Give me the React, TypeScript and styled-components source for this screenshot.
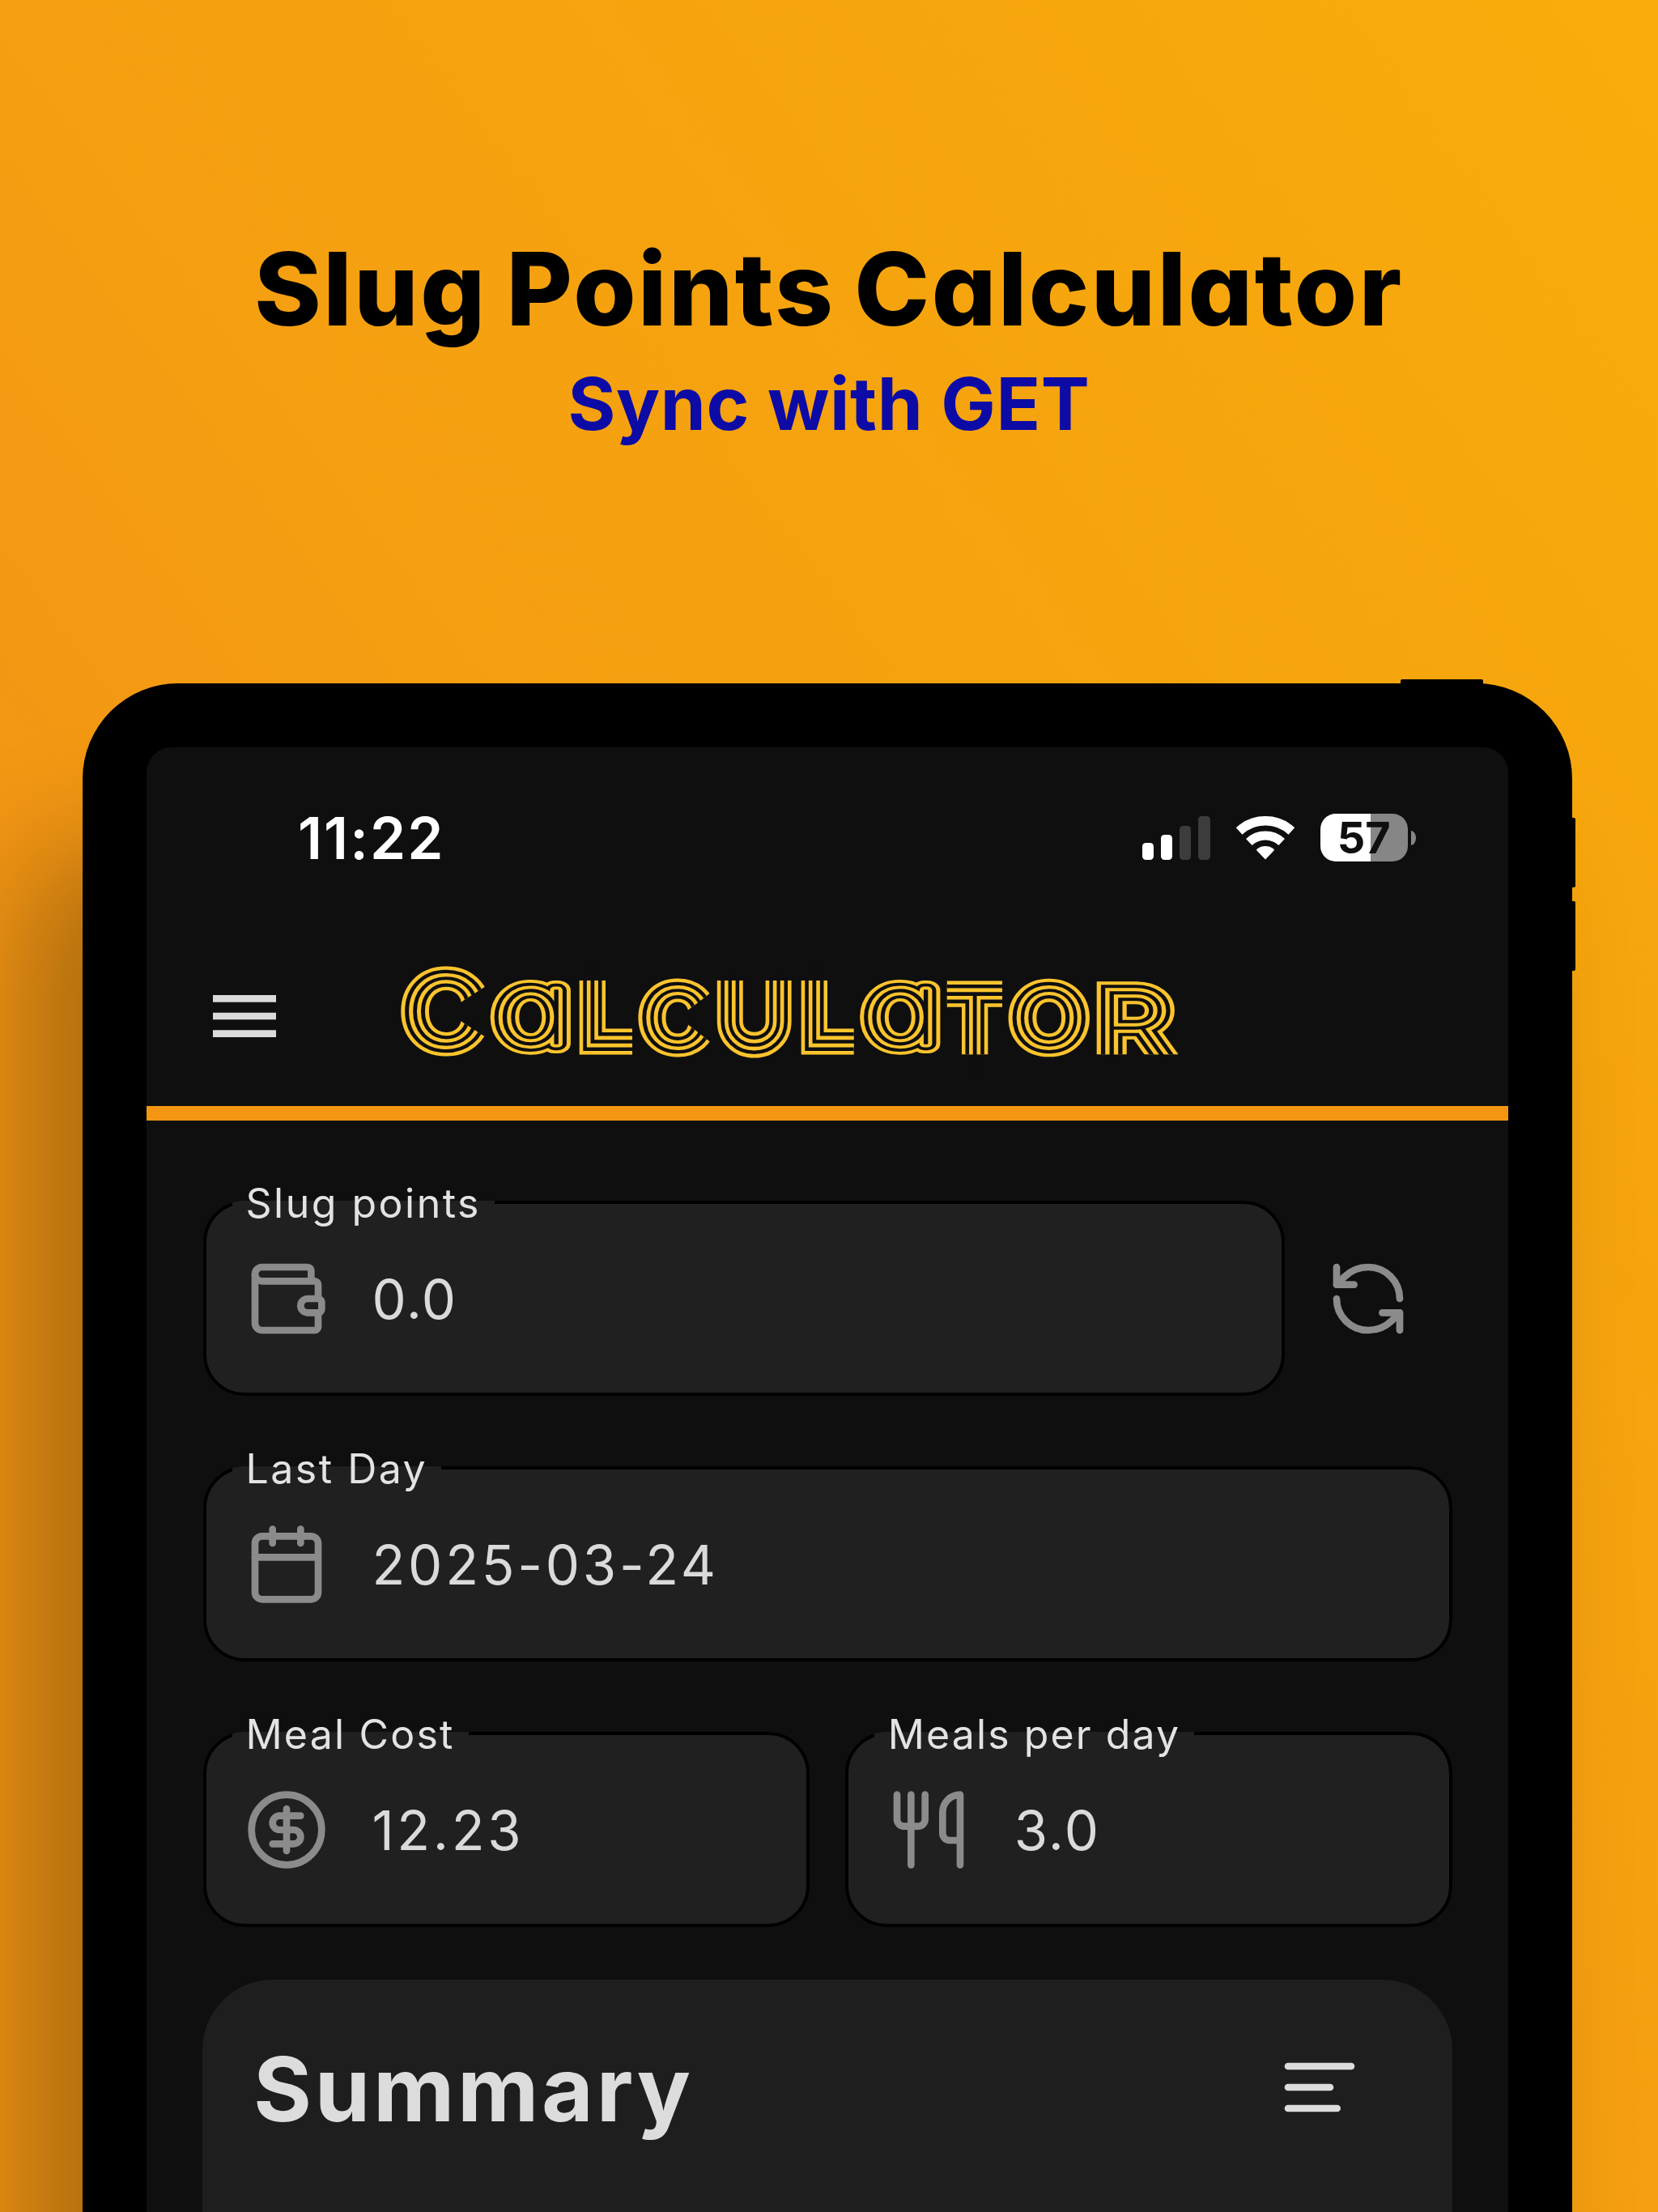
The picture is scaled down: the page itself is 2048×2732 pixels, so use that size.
import React from "react";
import styled, { createGlobalStyle } from "styled-components";

const GlobalStyle = createGlobalStyle`
  *, *::before, *::after { box-sizing: border-box; }
  body { margin: 0; }
`;

const sans = `Inter, "Liberation Sans", sans-serif`;

const Page = styled.main`
  display: flex;
  flex-direction: column;
  align-items: center;
  width: 2048px;
  height: 2732px;
  overflow: hidden;
  background: linear-gradient(to bottom left, #f9ac0b 0%, #f6a50d 25%, #f59f11 50%, #f39614 68%);
  font-family: ${sans};
`;

const Hero = styled.header`
  flex: none;
  width: 100%;
  height: 844px;
  padding-top: 282px;
  text-align: center;
`;

const Title = styled.h1`
  margin: 0;
  font-size: 125px;
  font-weight: 800;
  line-height: 150px;
  letter-spacing: 2.5px;
  word-spacing: -6px;
  font-feature-settings: "cv11";
  color: #000;
`;

const Subtitle = styled.h2`
  margin: 17px 0 0;
  font-size: 90px;
  font-weight: 700;
  line-height: 100px;
  letter-spacing: 0.6px;
  color: #0c0ba6;
`;

const Device = styled.section`
  position: relative;
  flex: none;
  width: 1840px;
  height: 2100px;
  margin-right: 4px;
  padding: 79px;
  border-radius: 118px;
  background: #000;
  box-shadow: -80px 200px 150px rgba(0, 0, 0, 0.28);
`;

const TopButton = styled.span`
  position: absolute;
  top: -5px;
  right: 110px;
  width: 102px;
  height: 10px;
  border-radius: 2px 2px 0 0;
  background: #000;
`;

const SideButton = styled.span<{ $top: number }>`
  position: absolute;
  top: ${(p) => p.$top}px;
  right: -4px;
  width: 8px;
  height: 86px;
  border-radius: 0 2px 2px 0;
  background: #000;
`;

const Screen = styled.div`
  height: 100%;
  overflow: hidden;
  border-radius: 31px;
  background: #0f0f0f;
`;

const StatusBar = styled.div`
  display: flex;
  align-items: center;
  justify-content: space-between;
  height: 220px;
  padding: 3px 114px 0 187px;
`;

const Clock = styled.time`
  font-size: 71px;
  font-weight: 600;
  line-height: 80px;
  letter-spacing: 2.1px;
  color: #fff;
`;

const Indicators = styled.div`
  display: flex;
  align-items: center;
  gap: 32px;
`;

const Signal = styled.div`
  display: flex;
  align-items: flex-end;
  gap: 8.7px;
  height: 54px;
`;

const SignalBar = styled.span<{ $height: number; $on?: boolean }>`
  width: 14.4px;
  height: ${(p) => p.$height}px;
  border-radius: 4.5px;
  background: ${(p) => (p.$on ? "#fff" : "#3c3c3c")};
`;

const Battery = styled.div`
  display: flex;
  align-items: center;
  gap: 4px;
`;

const BatteryBody = styled.div`
  display: flex;
  align-items: center;
  justify-content: center;
  width: 108.5px;
  height: 59.5px;
  border-radius: 19px;
  background: linear-gradient(to right, #fff 57.5%, #868686 57.5%);
  color: #0f0f0f;
  font-size: 54px;
  font-weight: 700;
  line-height: 60px;
`;

const BatteryCap = styled.span`
  width: 6px;
  height: 18px;
  border-radius: 0 6px 6px 0 / 0 9px 9px 0;
  background: #868686;
`;

const AppBar = styled.div`
  display: flex;
  align-items: center;
  height: 241px;
  padding-left: 69px;
  border-bottom: 18px solid #f39712;
`;

const Wordmark = styled.svg`
  width: 970px;
  height: 150px;
  margin-left: 136px;
  font-family: Inter, sans-serif;
  font-weight: 100;
  font-feature-settings: "cv11";
`;

const Stripe = styled.g<{ $width: number; $dark?: boolean }>`
  --stripe: ${(p) => p.$width}px;
  fill: ${(p) => (p.$dark ? "#0f0f0f" : "#fcc42d")};
  stroke: ${(p) => (p.$dark ? "#0f0f0f" : "#fcc42d")};
`;

const GlyphSpan = styled.tspan<{ $size: number; $pen: number; $caps: boolean }>`
  font-size: ${(p) => p.$size}px;
  stroke-width: calc(var(--stripe) * ${(p) => p.$pen});
  stroke-linejoin: ${(p) => (p.$caps ? "miter" : "round")};
  text-transform: ${(p) => (p.$caps ? "uppercase" : "none")};
`;

const Form = styled.div`
  display: flex;
  flex-direction: column;
  gap: 57px;
  padding: 69px 69.5px 0;
`;

const FormRow = styled.div`
  display: flex;
  gap: 43.5px;
`;

const FieldBox = styled.fieldset<{ $width?: number }>`
  flex: ${(p) => (p.$width ? `0 0 ${p.$width}px` : "1 1 0")};
  min-width: 0;
  height: 271px;
  margin: 0;
  padding: 0 32px;
  border: 4px solid #000;
  border-radius: 51px;
  background: #202020;
`;

const FieldLabel = styled.legend<{ $tracking: number }>`
  height: 63px;
  padding: 3px 17px 0;
  font-size: 50px;
  line-height: 60px;
  letter-spacing: ${(p) => p.$tracking}px;
  color: #e3e3e3;
`;

const FieldBody = styled.div`
  display: flex;
  align-items: center;
  gap: 54px;
  height: 104px;
  margin-top: 36px;
  padding-left: 15px;
`;

const FieldValue = styled.span<{ $tracking: number }>`
  padding-top: 2px;
  font-size: 67px;
  line-height: 80px;
  letter-spacing: ${(p) => p.$tracking}px;
  color: #dadada;
`;

const SyncButton = styled.button`
  display: flex;
  margin: 99px 0 0 8px;
  padding: 0;
  height: 104px;
  border: 0;
  background: none;
`;

const IconSvg = styled.svg<{ $tone: string }>`
  flex: none;
  width: 104px;
  height: 104px;
  fill: none;
  stroke: ${(p) => p.$tone};
  stroke-width: 2;
  stroke-linecap: round;
  stroke-linejoin: round;
`;

const Card = styled.section`
  height: 600px;
  margin: 65px 69px 0;
  padding: 81px 112px 0 63px;
  border-radius: 87px;
  background: #1e1e1e;
`;

const CardHeader = styled.div`
  display: flex;
  align-items: center;
  justify-content: space-between;
  height: 104px;
`;

const CardTitle = styled.h3`
  margin: 0;
  padding-top: 4px;
  font-size: 110px;
  font-weight: 700;
  line-height: 130px;
  letter-spacing: 3.7px;
  color: #dcdcdc;
`;

const icons = {
  wallet: [
    "M19 7V4a1 1 0 0 0-1-1H5a2 2 0 0 0 0 4h15a1 1 0 0 1 1 1v4h-3a2 2 0 0 0 0 4h3a1 1 0 0 0 1-1v-2a1 1 0 0 0-1-1",
    "M3 5v14a2 2 0 0 0 2 2h15a1 1 0 0 0 1-1v-4",
  ],
  sync: [
    "M21 12a9 9 0 0 0-9-9 9.75 9.75 0 0 0-6.74 2.74L3 8",
    "M3 3v5h5",
    "M3 12a9 9 0 0 0 9 9 9.75 9.75 0 0 0 6.74-2.74L21 16",
    "M16 16h5v5",
  ],
  calendar: [
    "M8 2v4",
    "M16 2v4",
    "M5 4h14a2 2 0 0 1 2 2v14a2 2 0 0 1-2 2H5a2 2 0 0 1-2-2V6a2 2 0 0 1 2-2z",
    "M3 10h18",
  ],
  dollar: [
    "M12 2a10 10 0 1 0 0 20a10 10 0 1 0 0-20z",
    "M16 8h-6a2 2 0 1 0 0 4h4a2 2 0 1 1 0 4H8",
    "M12 18V6",
  ],
  utensils: [
    "M3 2v7c0 1.1.9 2 2 2h4a2 2 0 0 0 2-2V2",
    "M7 2v20",
    "M21 15V2a5 5 0 0 0-5 5v6c0 1.1.9 2 2 2h3Zm0 0v7",
  ],
  sort: ["M3 6h18", "M3 12h12", "M3 18h14"],
};

function Icon({ name, tone = "#8b8b8b" }: { name: keyof typeof icons; tone?: string }) {
  return (
    <IconSvg viewBox="0 0 24 24" $tone={tone} aria-hidden>
      {icons[name].map((d) => (
        <path key={d} d={d} />
      ))}
    </IconSvg>
  );
}

function MenuIcon() {
  return (
    <IconSvg viewBox="0 0 24 24" $tone="none" aria-hidden>
      <path fill="#dadada" d="M3 18h18v-2H3v2zm0-5h18v-2H3v2zm0-7v2h18V6H3z" />
    </IconSvg>
  );
}

function WifiIcon() {
  return (
    <svg width="72" height="54" viewBox="-36 -53.5 72 54" aria-hidden>
      <g fill="none" stroke="#fff">
        <path strokeWidth="11.4" d="M-32.4 -35 A47.7 47.7 0 0 1 32.4 -35" />
        <path strokeWidth="11" d="M-20.2 -21.5 A29.5 29.5 0 0 1 20.2 -21.5" />
      </g>
      <path fill="#fff" d="M0 0L-10.4 -10.8Q-11.6 -12 -10.2 -13A17 17 0 0 1 10.2 -13Q11.6 -12 10.4 -10.8Z" />
    </svg>
  );
}

type Letter = {
  char: string;
  x: number;
  y: number;
  size: number;
  /* advance width when the letter is widened */
  span?: number;
  pen?: number;
  /* area the stripes are kept in, so that stroke ends stay open */
  trim: string;
};

const letters: Letter[] = [
  { char: "C", x: 11.5, y: 110.3, size: 112.8, span: 95.8, pen: 0.92, trim: "M0 0H118V33L85 54L63 70L85 85L118 106V150H0Z" },
  { char: "a", x: 121.5, y: 108.7, size: 120, span: 92.9, pen: 0.82, trim: "M100 20H230V130H100Z" },
  { char: "l", x: 225.4, y: 107.8, size: 131, trim: "M215 31H291V124H215Z" },
  { char: "c", x: 306.3, y: 110.7, size: 93.5, span: 79.1, pen: 0.92, trim: "M290 20H390V44.4L364.5 64L348 76.7L364.5 89L390 109V150H290Z" },
  { char: "u", x: 398.7, y: 110.7, size: 119.5, trim: "M385 31H500V150H385Z" },
  { char: "l", x: 499.5, y: 107.8, size: 131, trim: "M490 31H564.7V124H490Z" },
  { char: "a", x: 578, y: 108.7, size: 120, span: 92.9, pen: 0.82, trim: "M560 20H690V130H560Z" },
  { char: "t", x: 670.9, y: 147.5, size: 140, trim: "M679.8 20H748V122.3H679.8Z" },
  { char: "o", x: 763.5, y: 110.7, size: 93.5, span: 84.5, pen: 0.91, trim: "M740 20H870V150H740Z" },
  { char: "r", x: 864.8, y: 126.3, size: 112, span: 91.2, pen: 0.87, trim: "M850 20H970V122.3H850Z" },
];

const stripes = [{ width: 29.2 }, { width: 20.2, dark: true }, { width: 10.9 }];

function Glyph({ letter }: { letter: Letter }) {
  const { char, x, y, size, span, pen = 1 } = letter;
  return (
    <GlyphSpan
      $size={size}
      $pen={pen}
      $caps={char !== "a"}
      x={x}
      y={y}
      textLength={span}
      lengthAdjust={span ? "spacingAndGlyphs" : undefined}
    >
      {char}
    </GlyphSpan>
  );
}

/* Striped display lettering: each pass strokes the letter with a narrower pen. */
function Logo() {
  return (
    <Wordmark viewBox="0 0 970 150" role="img" aria-label="Calculator">
      <defs>
        {letters.map((letter, i) => (
          <React.Fragment key={i}>
            <clipPath id={`trim-${i}`}>
              <path d={letter.trim} />
            </clipPath>
            <text id={`glyph-${i}`}>
              <Glyph letter={letter} />
            </text>
          </React.Fragment>
        ))}
      </defs>
      {letters.map((_, i) => (
        <g key={i} clipPath={`url(#trim-${i})`}>
          {stripes.map((s) => (
            <Stripe key={s.width} $width={s.width} $dark={s.dark}>
              <use href={`#glyph-${i}`} />
            </Stripe>
          ))}
        </g>
      ))}
      <Stripe $width={1.7} $dark>
        <text>
          {letters.map((letter, i) => (
            <Glyph key={i} letter={letter} />
          ))}
        </text>
      </Stripe>
    </Wordmark>
  );
}

type FieldProps = {
  label: string;
  labelTracking?: number;
  value: string;
  icon: keyof typeof icons;
  tracking: number;
  width?: number;
};

function Field({ label, labelTracking = 2.2, value, icon, tracking, width }: FieldProps) {
  return (
    <FieldBox $width={width}>
      <FieldLabel $tracking={labelTracking}>{label}</FieldLabel>
      <FieldBody>
        <Icon name={icon} />
        <FieldValue $tracking={tracking}>{value}</FieldValue>
      </FieldBody>
    </FieldBox>
  );
}

export default function App() {
  return (
    <>
      <GlobalStyle />
      <Page>
        <Hero>
          <Title>Slug Points Calculator</Title>
          <Subtitle>Sync with GET</Subtitle>
        </Hero>
        <Device>
          <TopButton />
          <SideButton $top={166} />
          <SideButton $top={269} />
          <Screen>
            <StatusBar>
              <Clock>11:22</Clock>
              <Indicators>
                <Signal>
                  <SignalBar $height={20.5} $on />
                  <SignalBar $height={30.7} $on />
                  <SignalBar $height={41.5} />
                  <SignalBar $height={53.5} />
                </Signal>
                <WifiIcon />
                <Battery>
                  <BatteryBody>57</BatteryBody>
                  <BatteryCap />
                </Battery>
              </Indicators>
            </StatusBar>
            <AppBar>
              <MenuIcon />
              <Logo />
            </AppBar>
            <Form>
              <FormRow>
                <Field label="Slug points" labelTracking={2.5} value="0.0" icon="wallet" tracking={1.6} width={1336} />
                <SyncButton aria-label="Sync">
                  <Icon name="sync" />
                </SyncButton>
              </FormRow>
              <FormRow>
                <Field label="Last Day" labelTracking={2.5} value="2025-03-24" icon="calendar" tracking={3.75} />
              </FormRow>
              <FormRow>
                <Field label="Meal Cost" value="12.23" icon="dollar" tracking={3.6} />
                <Field label="Meals per day" labelTracking={2.1} value="3.0" icon="utensils" tracking={2.2} />
              </FormRow>
            </Form>
            <Card>
              <CardHeader>
                <CardTitle>Summary</CardTitle>
                <Icon name="sort" tone="#dcdcdc" />
              </CardHeader>
            </Card>
          </Screen>
        </Device>
      </Page>
    </>
  );
}
